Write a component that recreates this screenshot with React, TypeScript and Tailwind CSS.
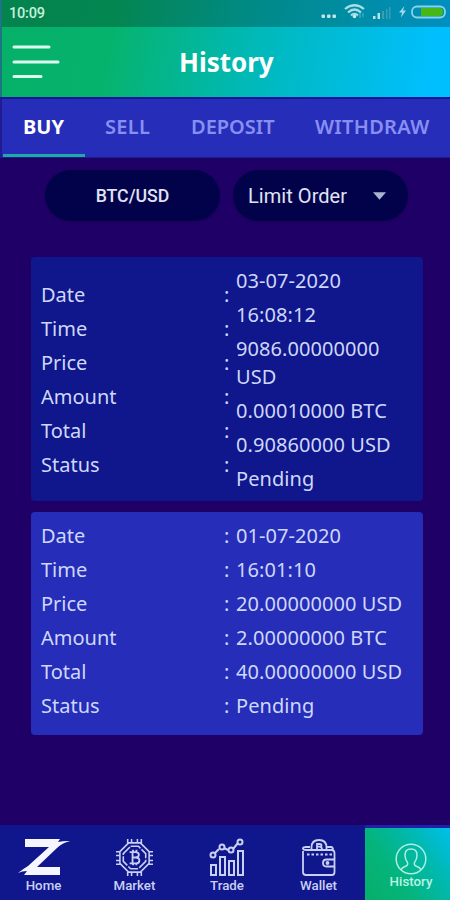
import React from "react";

const labels = ["Date", "Time", "Price", "Amount", "Total", "Status"];

const orders = [
  {
    card: "bg-[#10168b] h-[244px]",
    labelPad: "pt-[14px]",
    values: ["03-07-2020", "16:08:12", "9086.00000000 USD", "0.00010000 BTC", "0.90860000 USD", "Pending"],
  },
  {
    card: "bg-[#262db8] h-[223px] mt-[11px]",
    labelPad: "",
    values: ["01-07-2020", "16:01:10", "20.00000000 USD", "2.00000000 BTC", "40.00000000 USD", "Pending"],
  },
];

function StatusBar() {
  return (
    <div className="flex h-[27px] items-center justify-between bg-black/25 pl-[7px] font-['Roboto',sans-serif] text-[14.5px] font-medium leading-none text-[#c9efdc]">
      <span className="pt-px tracking-[-0.2px]">10:09</span>
      <svg width="130" height="27" viewBox="0 0 130 27" fill="none">
        <g fill="#c5e5e7">
          <rect x="1.500" y="14.500" width="3.500" height="3.500" rx="1" />
          <rect x="7" y="14.500" width="3.500" height="3.500" rx="1" />
          <rect x="12.500" y="14.500" width="3.500" height="3.500" rx="1" />
        </g>
        <g stroke="#a9dce5" strokeWidth="2.200">
          <path d="M25 9 Q34.500 1.500 44 9" />
          <path d="M28 12.500 Q34.500 6.500 41 12.500" />
          <path d="M31 15.500 Q34.500 12 38 15.500" />
        </g>
        <circle cx="34.500" cy="16.500" r="1.800" fill="#c5eaf0" />
        <path d="M40 13v5m3-5v4" stroke="#55b6dc" />
        <path d="M53 16h2.500v3h-2.500zM57.500 13h2.500v6h-2.500z" fill="#b5e4e8" />
        <path d="M62 11h2v8h-2zM66 9h1.500v10h-1.500zM69 7h1.500v12h-1.500z" fill="#3d9db0" />
        <path d="M84.500 6l-5.500 6.500h3l-1 5 5-7h-3z" fill="#9cdaed" />
        <rect x="92" y="6.500" width="33" height="11" rx="5" stroke="#8bd3df" strokeWidth="1.800" />
        <path d="M101 8h18q4 0 4 4t-4 4h-18z" fill="#45b817" />
      </svg>
    </div>
  );
}

type Order = (typeof orders)[number];

function OrderCard({ card, labelPad, values }: Order) {
  return (
    <section className={`flex rounded-[4px] pl-[10px] pt-[10px] text-[20px] leading-[28px] text-[#ced8fa] ${card}`}>
      <div className={`flex w-[183px] flex-col gap-[6px] ${labelPad}`}>
        {labels.map((label) => <div key={label}>{label}</div>)}
      </div>
      <div className={`flex w-[12px] flex-col gap-[6px] ${labelPad}`}>
        {labels.map((label) => <div key={label}>:</div>)}
      </div>
      <div className="flex w-[176px] flex-col gap-[6px] tracking-[0.07px]">
        {values.map((value, i) => <div key={i}>{value}</div>)}
      </div>
    </section>
  );
}

function HomeIcon() {
  return (
    <svg width="54" height="38" viewBox="0 0 54 38" fill="#f5f6ff">
      <path d="M8 1H43L41 4Q48 2.500 53 3Q45 5 40 10L20 29H43V37H7L10 33Q5 33 1 35Q6 31 11 28L32 9H8Z" />
    </svg>
  );
}

function MarketIcon() {
  return (
    <svg width="37" height="37" viewBox="0 0 38 38" fill="none" stroke="#c9d0f5" strokeWidth="1.600">
      <path d="M13 4h12l9 9v12l-9 9H13l-9-9V13zM12 0v4m4-4v4m6-4v4m4-4v4M12 34v4m4-4v4m6-4v4m4-4v4M0 13h4m-4 4h4m-4 5h4m-4 4h4M34 13h4m-4 4h4m-4 5h4m-4 4h4" />
      <path d="M15 7.500h8l7.500 7.500v8L23 30.500h-8L7.500 23v-8z" strokeDasharray="11 1.500" />
      <path d="M14 13.500h6q3.500 0 3.500 2.700T20 19h-3m-3 6h6.500q3.500 0 3.500-3t-4-3M17 13.500V25M17.500 11v2m3.500-2v2m-3.500 12v2m3.500-2v2" strokeWidth="1.900" />
    </svg>
  );
}

function TradeIcon() {
  return (
    <svg width="36" height="38" viewBox="0 0 36 38" fill="none" stroke="#c9d0f5" strokeWidth="2">
      <path d="M2 27h5v10H2zM11 19h5v18h-5zM20 23h5v14h-5zM29 13h5v24h-5zM6 15l4-4m5-1 4 2m5-1 5-6" />
      <circle cx="4" cy="17" r="2.500" />
      <circle cx="13" cy="9" r="2.500" />
      <circle cx="22" cy="12" r="2.500" />
      <circle cx="31" cy="4" r="2.500" />
    </svg>
  );
}

function WalletIcon() {
  return (
    <svg width="35" height="37" viewBox="0 0 35 37" fill="none" stroke="#c9d0f5" strokeWidth="1.800">
      <path d="M2 12v21q0 3 3 3h26q2.500 0 2.500-3v-5M33.500 20v-6q0-3-3-3H5q-3 0-3-1.500Q2 8 5 8h4m16 0h5q2 0 2 3" />
      <path d="M6 15.500h25" strokeDasharray="2.500 2" />
      <path d="M33.500 20.500h-8q-3.500 0-3.500 3.500t3.500 3.500h8zM10.500 11V8.500q0-7.500 7.500-7.500t7.500 7.500V11" />
      <path d="M16 10.500V5h2.500q2 0 2 1.500t-2 1.200H16m2.500 0q2.500 0 2.500 2.800" />
      <circle cx="26.500" cy="24" r="1" />
    </svg>
  );
}

function HistoryIcon() {
  return (
    <svg width="32" height="32" viewBox="0 0 32 32" fill="none" stroke="#aeefe0" strokeWidth="1.500">
      <circle cx="16" cy="16" r="14.800" />
      <path d="M6 27q1-2.500 4-3.500 3.500-1 2.500-4-2.500-3-2.500-7.500 0-6 6-6t6 6q0 4.500-2.500 7.500-1 3 2.500 4 3 1 4 3.500" />
    </svg>
  );
}

const navItems = [
  { name: "Home", Icon: HomeIcon, box: "w-[87px]" },
  { name: "Market", Icon: MarketIcon, box: "w-[95px]" },
  { name: "Trade", Icon: TradeIcon, box: "w-[90px]" },
  { name: "Wallet", Icon: WalletIcon, box: "w-[93px]" },
];

export default function App() {
  return (
    <main className="flex h-[900px] w-[450px] flex-col overflow-hidden bg-[#1f0066] font-['Noto_Sans','Open_Sans',sans-serif]">
      <div className="h-[97px] shrink-0 border-l-2 border-[#1c7583] bg-[linear-gradient(100deg,#05b068_0%,#06b36d_25%,#00b9bc_58%,#00bfff_96%)]">
        <StatusBar />
        <header className="flex h-[70px] items-center pl-[10px]">
          <svg width="48" height="36" viewBox="0 0 48 36" stroke="#dcfff0" strokeWidth="3" strokeLinecap="round">
            <path d="M2 3h35M2 18h44M2 32.500h27" />
          </svg>
          <h1 className="ml-[119px] whitespace-nowrap text-[26px] font-bold leading-none text-white">History</h1>
        </header>
      </div>
      <nav className="flex h-[61px] shrink-0 border-l-2 border-t-2 border-b border-b-[#211b91] border-l-[#211b91] border-t-[#151599] bg-[#262db8] pl-px text-[20px] font-semibold leading-[56px] text-[#8790f2]">
        <div className="w-[82px] border-b-[3px] border-[#20aaa5] pl-[20px] font-bold text-white">BUY</div>
        <div className="ml-[20px] w-[86px] tracking-[0.3px]">SELL</div>
        <div className="w-[124px]">DEPOSIT</div>
        <div className="tracking-[0.3px]">WITHDRAW</div>
      </nav>
      <div className="flex h-[99px] shrink-0 gap-[13px] pl-[45px] pt-[12px] font-['Roboto',sans-serif] text-[#e0e3f3]">
        <button className="h-[51px] w-[175px] rounded-full bg-[#02024a] pt-px text-[17.7px] font-medium shadow-sm">BTC/USD</button>
        <button className="flex h-[51px] w-[175px] items-center rounded-full bg-[#02024a] pl-[15px] text-[20px] shadow-sm">
          <span className="w-[125px] text-left tracking-[0.05px]">Limit Order</span>
          <svg width="13" height="8" viewBox="0 0 14 8" fill="#a9b4d1"><path d="M0 0h14L7 8z" /></svg>
        </button>
      </div>
      <div className="ml-[31px] w-[392px]">
        {orders.map((order, i) => <OrderCard key={i} {...order} />)}
      </div>
      <footer className="mt-auto flex h-[75px] shrink-0 bg-[#10168b] font-['Roboto',sans-serif] text-[13.3px] font-medium text-[#c9d0f5]">
        {navItems.map(({ name, Icon, box }) => (
          <div key={name} className={`flex flex-col items-center ${box}`}>
            <div className="flex h-[53px] items-end pb-[2px]"><Icon /></div>
            <span className="leading-[16px]">{name}</span>
          </div>
        ))}
        <div className="flex w-[85px] flex-col items-center border-t-[3px] border-[#2021a8] bg-[linear-gradient(55deg,#07ae69_0%,#05b47b_35%,#00b9b2_70%,#00bfed_100%)] pl-[7px] pt-[15px]">
          <HistoryIcon />
          <span className="-mt-px leading-[16px] text-[#b9f3e4]">History</span>
        </div>
      </footer>
    </main>
  );
}
